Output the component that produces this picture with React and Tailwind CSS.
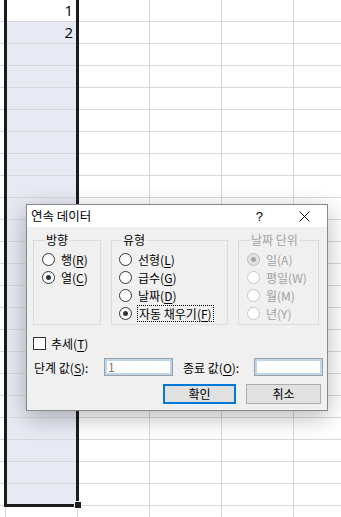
import React from 'react';

const ROWS = Array.from({ length: 24 }, (_, i) => i);

function Radio({ checked, disabled, focus, children }) {
  return (
    <div className="flex h-[18px] items-center gap-[5px]">
      <span
        className={`flex h-[13px] w-[13px] shrink-0 items-center justify-center rounded-full border ${
          disabled ? (checked ? 'border-[#bcbcbc] bg-[#e3e3e3]' : 'border-[#c8c8c8] bg-white') : 'border-[#333333] bg-white'
        }`}
      >
        {checked && <span className={`h-[5px] w-[5px] rounded-full ${disabled ? 'bg-[#a3a3a3]' : 'bg-[#333333]'}`} />}
      </span>
      <span
        className={`whitespace-nowrap leading-[15px] ${disabled ? 'text-[#a0a0a0]' : 'text-black'} ${
          focus ? 'border border-dotted border-black px-[1px]' : 'border border-transparent'
        }`}
      >
        {children}
      </span>
    </div>
  );
}

const U = ({ children }) => <span className="underline decoration-1 underline-offset-2">{children}</span>;

function Group({ label, disabled, width, padLeft, children }) {
  return (
    <fieldset className={`h-[93px] border border-[#dcdcdc] ${width} ${padLeft}`}>
      <legend className={`ml-[3px] px-[1px] leading-[16px] ${disabled ? 'text-[#a0a0a0]' : 'text-black'}`}>{label}</legend>
      <div className="pt-[2px]">{children}</div>
    </fieldset>
  );
}

export default function App() {
  return (
    <div className="relative h-[517px] w-[341px] overflow-hidden bg-white font-['Noto_Sans_CJK_KR',sans-serif]">
      {/* Sheet grid */}
      {ROWS.map(i => (
        <div key={i} className="flex h-[22px] border-b border-[#d5d8df]">
          <div className="w-[6px] shrink-0 border-r border-[#d5d8df]" />
          <div
            className={`flex w-[72px] shrink-0 items-center justify-end border-r border-[#d5d8df] pr-[4px] font-['Open_Sans',sans-serif] text-[15px] leading-none text-black ${
              i >= 1 && i <= 22 ? 'bg-[#e7e9f3]' : 'bg-white'
            }`}
          >
            {i === 0 ? '1' : i === 1 ? '2' : ''}
          </div>
          <div className="w-[72px] shrink-0 border-r border-[#d5d8df]" />
          <div className="w-[72px] shrink-0 border-r border-[#d5d8df]" />
          <div className="w-[72px] shrink-0 border-r border-[#d5d8df]" />
          <div className="w-[72px] shrink-0" />
        </div>
      ))}

      {/* Selection */}
      <div className="absolute left-[4px] top-[-4px] h-[511px] w-[75px] border-[3px] border-[#1c1c1c]" />
      <div className="absolute left-[74px] top-[501px] h-[8px] w-[8px] border border-white bg-[#1c1c1c]" />

      {/* Series dialog */}
      <div className="absolute left-[26px] top-[204px] flex h-[207px] w-[302px] flex-col border border-[#888888] bg-[#f0f0f0] text-[12px] text-black shadow-[0_6px_22px_rgba(0,0,0,0.28)]">
        <div className="flex h-[22px] shrink-0 items-center bg-white pl-[4px]">
          <span className="text-[12.5px] leading-[16px]">연속 데이터</span>
          <span className="ml-auto font-['Liberation_Sans',sans-serif] text-[13px] leading-none">?</span>
          <svg className="ml-[36px] mr-[17px]" width="11" height="11" viewBox="0 0 11 11">
            <path d="M0.5 0.5L10.5 10.5M10.5 0.5L0.5 10.5" stroke="#111" strokeWidth="1" fill="none" />
          </svg>
        </div>

        <div className="mt-[5px] flex gap-[11px] pl-[6px]">
          <Group label="방향" width="w-[68px]" padLeft="pl-[8px]">
            <Radio>행(<U>R</U>)</Radio>
            <Radio checked>열(<U>C</U>)</Radio>
          </Group>
          <div className="-ml-px flex gap-[10px]">
            <Group label="유형" width="w-[117px]" padLeft="pl-[7px]">
              <Radio>선형(<U>L</U>)</Radio>
              <Radio>급수(<U>G</U>)</Radio>
              <Radio>날짜(<U>D</U>)</Radio>
              <Radio checked focus>자동 채우기(<U>F</U>)</Radio>
            </Group>
            <Group label="날짜 단위" disabled width="w-[81px]" padLeft="pl-[8px]">
              <Radio checked disabled>일(A)</Radio>
              <Radio disabled>평일(W)</Radio>
              <Radio disabled>월(M)</Radio>
              <Radio disabled>년(Y)</Radio>
            </Group>
          </div>
        </div>

        <div className="mt-[12px] flex h-[13px] items-center gap-[5px] pl-[6px]">
          <span className="h-[13px] w-[13px] border border-[#333333] bg-white" />
          <span className="leading-[15px]">추세(<U>T</U>)</span>
        </div>

        <div className="mt-[8px] flex h-[18px] items-center pl-[7px]">
          <span className="w-[70px] whitespace-nowrap leading-[15px]">단계 값(<U>S</U>):</span>
          <div className="flex h-[18px] w-[69px] items-center border border-[#a0a0a0] bg-white pl-[3px] text-[#777777] shadow-[inset_0_0_0_2px_#bcd6f0]">
            1
          </div>
          <span className="ml-[10px] w-[71px] whitespace-nowrap leading-[15px]">종료 값(<U>O</U>):</span>
          <div className="h-[18px] w-[69px] border border-[#a0a0a0] bg-white shadow-[inset_0_0_0_2px_#bcd6f0]" />
        </div>

        <div className="mt-[8px] flex justify-end gap-[10px] pr-[6px]">
          <button className="flex h-[20px] w-[73px] items-center justify-center border-2 border-[#0078d7] bg-[#e1e1e1] leading-none">확인</button>
          <button className="flex h-[20px] w-[75px] items-center justify-center border border-[#adadad] bg-[#e1e1e1] leading-none">취소</button>
        </div>
      </div>
    </div>
  );
}
